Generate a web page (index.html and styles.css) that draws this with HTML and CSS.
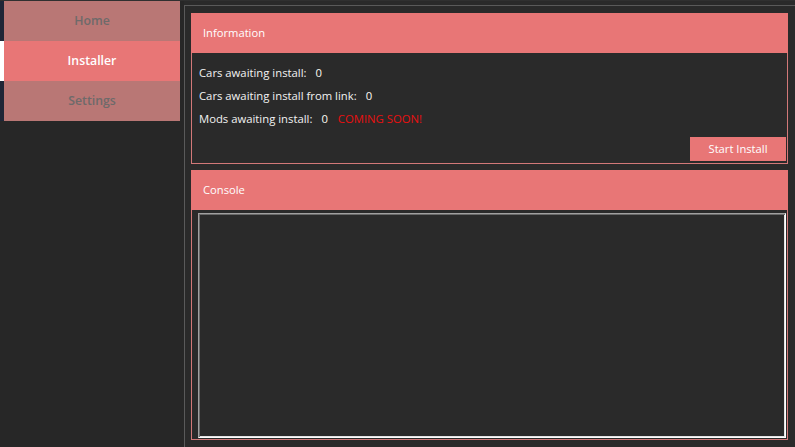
FILE: index.html
```html
<!DOCTYPE html>
<html>
<head>
<meta charset="utf-8">
<link rel="stylesheet" href="styles.css">
</head>
<body>
<div class="app">
  <nav class="sidebar">
    <div class="nav-item">Home</div>
    <div class="nav-item active">Installer</div>
    <div class="nav-item">Settings</div>
  </nav>
  <main class="main">
    <section class="group info">
      <div class="group-header">Information</div>
      <div class="group-body">
        <div class="line"><span class="label">Cars awaiting install:</span><span class="value">0</span></div>
        <div class="line"><span class="label">Cars awaiting install from link:</span><span class="value">0</span></div>
        <div class="line"><span class="label">Mods awaiting install:</span><span class="value">0</span><span class="soon">COMING SOON!</span></div>
        <button class="btn">Start Install</button>
      </div>
    </section>
    <section class="group console">
      <div class="group-header">Console</div>
      <div class="group-body console-body">
        <div class="textarea"></div>
      </div>
    </section>
  </main>
</div>
</body>
</html>
```
FILE: styles.css
```css
* { box-sizing: border-box; }
html, body { margin: 0; padding: 0; }
body {
  background: #2a2a2a;
  font-family: "Open Sans", "Noto Sans", sans-serif;
  color: #f2f2f2;
  width: 795px;
  height: 447px;
  overflow: hidden;
}
.app {
  display: flex;
  height: 447px;
  border-top: 1px solid #303030;
}
.sidebar {
  width: 184px;
  flex: none;
  background: #272727;
  display: flex;
  flex-direction: column;
}
.nav-item {
  width: 180px;
  height: 40px;
  border-left: 4px solid #1e2637;
  background: #b97775;
  color: #6e6a6a;
  font-size: 12.3px;
  font-weight: 600;
  display: flex;
  align-items: center;
  justify-content: center;
  padding-bottom: 1px;
}
.nav-item.active {
  border-left-color: #ffffff;
  background: #e87676;
  color: #ffffff;
}
.main {
  flex: 1;
  margin-top: 4px;
  border-top: 1px solid #5a5a5a;
  border-left: 1px solid #5a5a5a;
  padding: 7px 7px 7px 6px;
  display: flex;
  flex-direction: column;
  gap: 6px;
  background: #2a2a2a;
}
.group { display: flex; flex-direction: column; }
.group-header {
  height: 40px;
  background: #e87676;
  color: #ffffff;
  font-size: 11.2px;
  padding-left: 12px;
  padding-bottom: 2px;
  display: flex;
  align-items: center;
}
.group-body {
  border: 1px solid #d27878;
  border-top: none;
}
.info .group-body {
  padding: 8px 0 2px 7px;
  display: flex;
  flex-direction: column;
  font-size: 11.3px;
}
.line { height: 23px; line-height: 23px; white-space: nowrap; }
.value { margin-left: 9px; color: #fbf8f0; }
.soon { margin-left: 10px; color: #e81010; }
.btn {
  align-self: flex-end;
  margin: 7px 1px 0 0;
  width: 96px;
  height: 24px;
  border: none;
  background: #e87676;
  color: #ffffff;
  font-family: inherit;
  font-size: 11.2px;
  padding: 0 0 1px 0;
}
.console { flex: 1; }
.console-body {
  flex: 1;
  padding: 3px 1px 1px 6px;
  display: flex;
}
.textarea {
  flex: 1;
  border-style: solid;
  border-width: 1px;
  border-color: #a0a0a0 #ffffff #ffffff #a0a0a0;
  box-shadow: inset 1px 1px 0 #696969, inset -1px -1px 0 #e3e3e3;
  background: #2a2a2a;
}
```
